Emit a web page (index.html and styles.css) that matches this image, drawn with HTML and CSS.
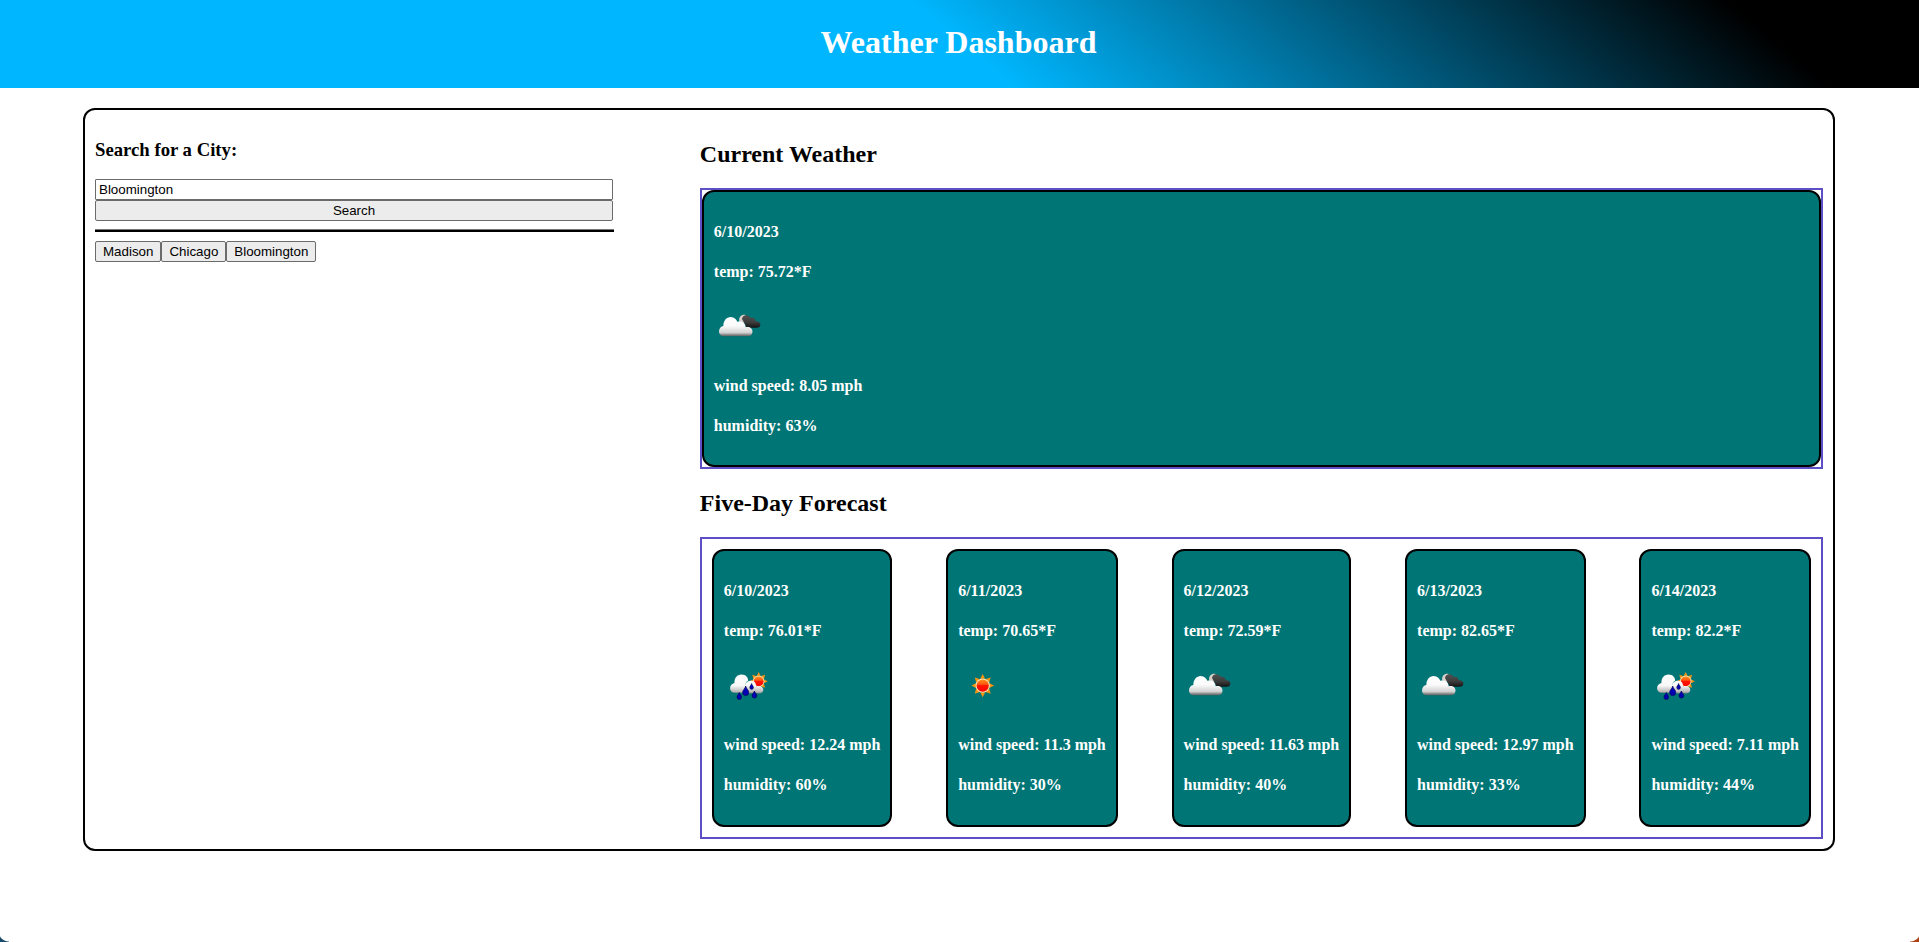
FILE: index.html
```html
<!DOCTYPE html>
<html lang="en">
<head>
<meta charset="UTF-8">
<title>Weather Dashboard</title>
<link rel="stylesheet" href="styles.css">
</head>
<body>
<svg class="defs" width="0" height="0" aria-hidden="true">
  <defs>
    <linearGradient id="white" x1="0" y1="13" x2="0" y2="34.5" gradientUnits="userSpaceOnUse">
      <stop offset="0" stop-color="#fff"/><stop offset=".5" stop-color="#fbfbfb"/><stop offset=".82" stop-color="#d2d2d2"/><stop offset=".92" stop-color="#8a8a8a"/><stop offset="1" stop-color="#555"/>
    </linearGradient>
    <linearGradient id="white-rain" x1="0" y1="12" x2="0" y2="33" gradientUnits="userSpaceOnUse">
      <stop offset="0" stop-color="#fff"/><stop offset=".6" stop-color="#f8f8f8"/><stop offset=".88" stop-color="#bbb"/><stop offset="1" stop-color="#777"/>
    </linearGradient>
    <linearGradient id="dark" x1="0" y1="12" x2="0" y2="26" gradientUnits="userSpaceOnUse">
      <stop offset="0" stop-color="#555"/><stop offset=".6" stop-color="#3c3c3c"/><stop offset="1" stop-color="#111"/>
    </linearGradient>
    <linearGradient id="disc" x1="0" y1="-7" x2="0" y2="7" gradientUnits="userSpaceOnUse">
      <stop offset="0" stop-color="#ff9a20"/><stop offset=".4" stop-color="#ff5a10"/><stop offset=".5" stop-color="#ff1500"/><stop offset="1" stop-color="#f00"/>
    </linearGradient>
    <g id="sun">
      <path fill="#f5930f" d="M0-11.7 2.4-6.8-2.4-6.8ZM11.4 0 6.8 2.4 6.8-2.4ZM0 11.7-2.4 6.8 2.4 6.8ZM-11.4 0-6.8-2.4-6.8 2.4ZM8-8.2 6.5-3 3-6.5ZM8 8.2 3 6.5 6.5 3ZM-8 8.2-6.5 3-3 6.5ZM-8-8.2-3-6.5-6.5-3Z"/>
      <circle r="7.2" fill="#ffe7b0"/>
      <circle r="6.1" fill="url(#disc)"/>
    </g>
    <symbol id="clear" viewBox="0 0 50 50"><use href="#sun" transform="translate(24.7 24.6)"/></symbol>
    <symbol id="clouds" viewBox="0 0 50 50">
      <path fill="#d9cfcb" d="M25.200 19C24.500 15 27.300 12.300 31 12.700L33 15 30 21Z"/>
      <path fill="url(#dark)" d="M28 17C28.200 14.500 30 13.200 32 13.200C34.600 13.200 36.200 14.600 36.800 16.200C39 15 41.500 16.600 41.600 19.300C44.500 18.800 46.400 20.300 46.400 22.500C46.400 24.700 44.800 25.700 42.500 25.700H33Z"/>
      <path fill="url(#white)" d="M9.800 34.300C6.800 34.300 5 32 5 29.300C5 26.400 6.800 24.300 9.400 23.900C9.300 19 12.300 15 16.800 15C20.300 15 22.300 17.200 23.300 19.800C27 18 31.500 20.500 31.600 25.300C35.500 24.200 38.500 26.500 38.500 29.500C38.500 32.500 36.700 34.300 34 34.300Z"/>
    </symbol>
    <symbol id="rain" viewBox="0 0 50 50">
      <use href="#sun" transform="translate(34.7 20.300) scale(.8)"/>
      <path fill="url(#white-rain)" d="M22 32.300C18.800 32.300 19 28 21 25.500C21.200 21.500 24 19.800 27.200 19.800C30.800 19.800 32.300 22.700 32 25.500C36 24 39.300 26 39.300 28.800C39.300 31 37.500 32.600 35 32.600Z"/>
      <path fill="url(#white-rain)" d="M11 31.800C8 31.800 6.100 29.700 6.100 27C6.100 24.500 8 22.500 10.400 22C10.300 17 13 13.500 17.500 13.500C22 13.500 24 16.500 24.200 19.500C21.500 21 21.300 24 21.600 26L20.500 31.800Z"/>
      <g fill="#0000b5" stroke="#00004e" stroke-width=".6">
        <path d="M15.300 31.500C16 33.500 17.600 34.200 17.600 36.200A2.300 2.300 0 0 1 13 36.200C13 34.200 14.700 33.500 15.300 31.500Z"/>
        <path d="M21.700 25C22.500 28 24.800 29 24.800 31.500A3.100 3.100 0 0 1 18.600 31.500C18.600 29 21 28 21.700 25Z"/>
        <path d="M27.600 22.500C28.100 24.300 29.400 25 29.400 26.600A1.800 1.800 0 0 1 25.800 26.600C25.800 25 27.100 24.300 27.600 22.500Z"/>
        <path d="M30.400 30C31.100 32 32.800 32.900 32.800 34.700A2.400 2.400 0 0 1 28 34.700C28 32.900 29.700 32 30.400 30Z"/>
      </g>
    </symbol>
  </defs>
</svg>
<header class="header"><h1>Weather Dashboard</h1></header>
<main class="container">
  <section class="search">
    <h3>Search for a City:</h3>
    <input class="field" type="text" value="Bloomington">
    <button class="btn submit">Search</button>
    <div class="rule"></div>
    <div class="history"><button class="btn">Madison</button><button class="btn">Chicago</button><button class="btn">Bloomington</button></div>
  </section>
  <section class="weather">
    <h2>Current Weather</h2>
    <div class="current">
      <article class="card"><h4>6/10/2023</h4><h4>temp: 75.72*F</h4><svg class="icon"><use href="#clouds"/></svg><h4>wind speed: 8.05 mph</h4><h4>humidity: 63%</h4></article>
    </div>
    <h2>Five-Day Forecast</h2>
    <div class="forecast">
      <article class="card"><h4>6/10/2023</h4><h4>temp: 76.01*F</h4><svg class="icon"><use href="#rain"/></svg><h4>wind speed: 12.24 mph</h4><h4>humidity: 60%</h4></article>
      <article class="card"><h4>6/11/2023</h4><h4>temp: 70.65*F</h4><svg class="icon"><use href="#clear"/></svg><h4>wind speed: 11.3 mph</h4><h4>humidity: 30%</h4></article>
      <article class="card"><h4>6/12/2023</h4><h4>temp: 72.59*F</h4><svg class="icon"><use href="#clouds"/></svg><h4>wind speed: 11.63 mph</h4><h4>humidity: 40%</h4></article>
      <article class="card"><h4>6/13/2023</h4><h4>temp: 82.65*F</h4><svg class="icon"><use href="#clouds"/></svg><h4>wind speed: 12.97 mph</h4><h4>humidity: 33%</h4></article>
      <article class="card"><h4>6/14/2023</h4><h4>temp: 82.2*F</h4><svg class="icon"><use href="#rain"/></svg><h4>wind speed: 7.11 mph</h4><h4>humidity: 44%</h4></article>
    </div>
  </section>
</main>
<div class="corner corner-left"></div>
<div class="corner corner-right"></div>
</body>
</html>
```
FILE: styles.css
```css
* { box-sizing: border-box; }
html { background: #fff; }
body {
  margin: 0;
  color: #000;
  font-family: "Liberation Serif", "Times New Roman", serif;
  font-size: 16px;
}
.defs { position: absolute; }
.header {
  height: 88px;
  display: flex;
  align-items: center;
  justify-content: center;
  padding: 0 2px 4px 0;
  color: #fff;
  background: linear-gradient(40deg, #00b7ff 50%, #000 90.5%);
}
h1 { margin: 0; font-size: 32px; line-height: 37px; }
h2 { margin: 20px 0; font-size: 24px; line-height: 28px; }
h3 { margin: 19px 0 18px; font-size: 18.72px; line-height: 22px; }
h4 { margin: 21.28px 0; font-size: 16px; line-height: 18px; }
.container {
  display: flex;
  justify-content: space-between;
  width: 1752px;
  height: 743px;
  margin: 20px 0 0 83px;
  padding: 10px;
  border: 2px solid #000;
  border-radius: 12px;
}
.search { width: 30%; }
.weather { width: 65%; }
.field, .btn {
  height: 21px;
  border: 1px solid #6b6b6b;
  border-radius: 2px;
  font: 13.333px/15px "Liberation Sans", Arial, sans-serif;
  color: #000;
}
.field { display: block; width: 518px; padding: 1px 3px; background: #fff; border-radius: 1px; }
.btn { background: #ececec; padding: 1px 7px; }
.submit { display: block; width: 518px; }
.rule {
  width: 519px;
  height: 3px;
  margin: 8px 0 9px;
  background: #000;
  border-top: 1px solid #777;
}
.history { display: flex; }
.current { height: 281px; border: 2px solid #5d50c6; }
.forecast {
  display: flex;
  justify-content: space-between;
  height: 302px;
  padding: 10px;
  border: 2px solid #5d50c6;
}
.card {
  display: flow-root;
  padding: 10px;
  color: #fff;
  background: #007575;
  border: 2px solid #000;
  border-radius: 12px;
}
.current .card { height: 277px; }
.icon { display: block; width: 50px; height: 50px; margin-bottom: 25.500px; }
.corner { position: fixed; bottom: 0; width: 9px; height: 11px; }
.corner-left { left: 0; background: radial-gradient(circle at 100% 0, transparent 10px, #174b68 11px); }
.corner-right { right: 0; background: radial-gradient(circle at 0 0, transparent 10px, #b04316 11px); }
```
